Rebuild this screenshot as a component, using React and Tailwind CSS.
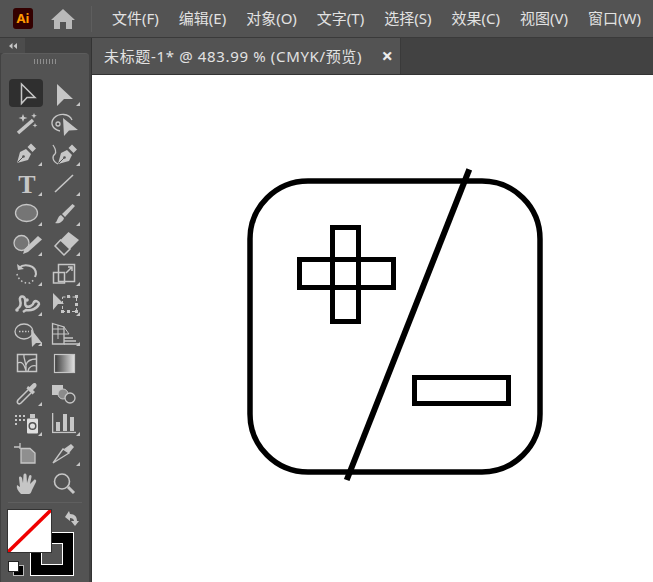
import React from "react";

const C = "#c6c6c6";
const menus = ["文件(F)", "编辑(E)", "对象(O)", "文字(T)", "选择(S)", "效果(C)", "视图(V)", "窗口(W)"];

const Pen = () => (
  <g fill={C}>
    <path d="M8 24 L11 13 L17 10 L22 15 L19 21 Z" />
    <path d="M18.5 8 L22 4.5 L27 9.5 L23.5 13 Z" />
    <path d="M8.500 23.500 L14 18" stroke="#535353" strokeWidth="1" />
    <circle cx="14.500" cy="17.500" r="1.300" fill="#535353" />
  </g>
);

const tools = [
  {
    active: true,
    icon: <path d="M12.500 5 L26 18.500 L18 18.500 L12.500 24.500 Z" fill="none" stroke={C} strokeWidth="1.500" />,
  },
  { corner: true, icon: <path d="M10 5 L26 20 L17 20 L10 27 Z" fill={C} /> },
  {
    icon: (
      <g fill={C}>
        <path d="M9 24 L24 11" stroke={C} strokeWidth="3.500" />
        <path d="M14 5 L15.200 8 L18.500 9 L15.200 10 L14 13 L12.800 10 L9.500 9 L12.800 8 Z" />
        <path d="M25 4 L25.800 6 L27.800 6.800 L25.800 7.600 L25 9.600 L24.200 7.600 L22.200 6.800 L24.200 6 Z" />
        <path d="M26 14 L26.700 15.700 L28.500 16.400 L26.700 17.100 L26 18.800 L25.300 17.100 L23.500 16.400 L25.300 15.700 Z" />
      </g>
    ),
  },
  {
    icon: (
      <g>
        <path d="M13 22 C5 20 3 14 7 9 C12 4 22 4 25 11" fill="none" stroke={C} strokeWidth="1.300" />
        <circle cx="11" cy="15" r="2" fill="none" stroke={C} strokeWidth="1.300" />
        <path d="M16 9 L31 21 L22 21.500 L17 27 Z" fill={C} />
      </g>
    ),
  },
  { corner: true, icon: <Pen /> },
  {
    corner: true,
    icon: (
      <g>
        <g transform="translate(3 1)"><Pen /></g>
        <path d="M11 25 C5 22 5 17 8 15 C10 12 8 9 6 6" fill="none" stroke={C} strokeWidth="1.300" />
      </g>
    ),
  },
  {
    corner: true,
    icon: (
      <text x="18" y="24" textAnchor="middle" fontFamily="Liberation Serif" fontWeight="700" fontSize="26" fill={C}>
        T
      </text>
    ),
  },
  { corner: true, icon: <path d="M8 23 L26 6" stroke={C} strokeWidth="1.600" /> },
  {
    corner: true,
    icon: <ellipse cx="17.500" cy="14" rx="11" ry="8.500" fill="#757575" stroke={C} strokeWidth="1.300" />,
  },
  {
    corner: true,
    icon: (
      <g fill={C}>
        <path d="M25.500 5 L28 7 L18 18 L15 15 Z" />
        <path d="M14 16 L17 19 C16 23 12 25 8 24 C11 22 10 18 14 16 Z" />
      </g>
    ),
  },
  {
    corner: true,
    icon: (
      <g>
        <circle cx="12.500" cy="14" r="7.500" fill="#757575" stroke={C} strokeWidth="1.300" />
        <path d="M29 7 L33 10.500 L19 23 L14 25 L15.500 20 Z" fill={C} />
      </g>
    ),
  },
  {
    corner: true,
    icon: (
      <g>
        <path d="M21.500 3 L32 11 L23 20 L13.500 11 Z" fill={C} />
        <path d="M13.500 11 L23 20 L17 26 L8 17 Z" fill="none" stroke={C} strokeWidth="1.500" />
      </g>
    ),
  },
  {
    corner: true,
    icon: (
      <g fill="none" stroke={C}>
        <path d="M10 9 C15 4 27 6 27 15 L26 18" strokeWidth="2" />
        <path d="M8 5 L9 11 L15 10 Z" fill={C} strokeWidth="0" />
        <path d="M8 15 C9 20 14 25 21 24 L26 20" strokeWidth="1.500" strokeDasharray="1.500 2.500" />
      </g>
    ),
  },
  {
    corner: true,
    icon: (
      <g fill="none" stroke={C} strokeWidth="1.500">
        <rect x="11.500" y="5.500" width="16" height="17" />
        <rect x="6.500" y="13.500" width="11" height="10.500" />
        <path d="M19 14 L25 8 M21 8 H25 V12" />
      </g>
    ),
  },
  {
    corner: true,
    icon: (
      <g fill="none" stroke={C} strokeWidth="2.500">
        <path d="M8 20 C12 18 12 14 11 11 C10 7 15 6 16 10 C17 14 15 15 17 17 C19 19 24 17 25 13 C27 11 30 13 30 15 C28 20 22 22 17 21 L14 23" />
        <circle cx="8" cy="21" r="1.800" fill={C} strokeWidth="0" />
        <circle cx="18" cy="11" r="1.800" fill={C} strokeWidth="0" />
      </g>
    ),
  },
  {
    corner: true,
    icon: (
      <g>
        <rect x="15.500" y="8" width="14" height="14.500" fill="none" stroke={C} strokeWidth="1" strokeDasharray="3 2" />
        <path d="M6 4 L17 15 L11 15 L6 21 Z" fill={C} />
        <g fill={C}>
          <rect x="20" y="6" width="3" height="3" />
          <rect x="28" y="6" width="3" height="3" />
          <rect x="28" y="14" width="3" height="3" />
          <rect x="28" y="21" width="3" height="3" />
          <rect x="20" y="21" width="3" height="3" />
          <rect x="14" y="21" width="3" height="3" />
        </g>
      </g>
    ),
  },
  {
    corner: true,
    icon: (
      <g>
        <ellipse cx="15" cy="12.500" rx="9" ry="7.500" fill="none" stroke={C} strokeWidth="1.300" />
        <path d="M10 12.500 H20" stroke={C} strokeWidth="1.300" strokeDasharray="1.500 1.500" />
        <path d="M22 10 L33 24 L27 24 L23 28 Z" fill={C} />
      </g>
    ),
  },
  {
    corner: true,
    icon: (
      <g fill="none" stroke={C} strokeWidth="1">
        <path d="M5.500 4.500 L17 8 V25 H5.500 Z" strokeWidth="1.300" />
        <path d="M5.500 10 H17 M5.500 15 H17 M11 6 V20 M17 8 L22 15 H17" />
        <path d="M17 19 H26 M17 22 H29 M17 25 H33" strokeWidth="1.500" />
      </g>
    ),
  },
  {
    icon: (
      <g fill="none" stroke={C} strokeWidth="1.500">
        <rect x="8.500" y="5.500" width="19" height="17" />
        <path d="M8.500 14 C13 12 15 15 17 22 M15 5.500 C14 10 18 13 17 22 M27.500 10 C22 10 18 12 17 16 M27.500 17 C24 16 20 17 19 22" strokeWidth="1.300" />
      </g>
    ),
  },
  {
    icon: (
      <g>
        <defs>
          <linearGradient id="grad">
            <stop offset="0" stopColor="#3a3a3a" />
            <stop offset="1" stopColor="#e4e4e4" />
          </linearGradient>
        </defs>
        <rect x="7.500" y="5.500" width="20" height="18" fill="url(#grad)" stroke={C} strokeWidth="1.200" />
      </g>
    ),
  },
  {
    corner: true,
    icon: (
      <g>
        <path d="M19 11 L9 21 C7 24 10 26 12 24 L22 14" fill="none" stroke={C} strokeWidth="1.500" />
        <path d="M17.500 9.500 L23.500 15.500 L26 13 L24 11 L27 8 C29 5 25.500 2.500 23.500 5 L20.500 8 L19 7 Z" fill={C} />
      </g>
    ),
  },
  {
    icon: (
      <g>
        <rect x="5" y="6" width="11" height="10" fill={C} />
        <circle cx="16" cy="15" r="5" fill="#8b8b8b" stroke={C} />
        <circle cx="23" cy="19" r="5" fill="#535353" stroke={C} strokeWidth="1.300" />
      </g>
    ),
  },
  {
    corner: true,
    icon: (
      <g>
        <g fill={C}>
          {[[6, 6], [10, 6], [14, 6], [6, 10], [10, 10], [14, 10], [6, 14]].map(([x, y]) => (
            <rect key={x + "-" + y} x={x} y={y} width="2" height="2" />
          ))}
          <rect x="21" y="5" width="5" height="4" />
        </g>
        <rect x="18" y="9.500" width="11" height="15" rx="1" fill="#e0e0e0" />
        <circle cx="23.500" cy="17" r="3.300" fill="none" stroke="#535353" strokeWidth="1.500" />
      </g>
    ),
  },
  {
    corner: true,
    icon: (
      <g fill={C}>
        <rect x="5" y="4" width="1.300" height="20" />
        <rect x="5" y="22.800" width="24" height="1.300" />
        <rect x="9" y="13" width="4" height="9" />
        <rect x="16" y="5" width="4" height="17" />
        <rect x="23" y="8" width="4" height="14" />
      </g>
    ),
  },
  {
    icon: (
      <g>
        <path d="M5 8 H11 M11 4 V10" stroke={C} strokeWidth="1.300" />
        <path d="M12 9.500 H21 L26 14 V24 H12 Z" fill="#8f8f8f" stroke={C} strokeWidth="1.300" />
      </g>
    ),
  },
  {
    corner: true,
    icon: (
      <g>
        <path d="M24 5 L27 8 L22 14 L17 10 Z" fill={C} />
        <path d="M6 24 L16 10 L22 14 Z" fill="none" stroke={C} strokeWidth="1.300" />
      </g>
    ),
  },
  {
    icon: (
      <path
        d="M12 25 C9 22 7 19 8 16 L11 18 L10 9 C10 7 12 7 13 9 L14 14 L14.500 6 C15 4 17 4 17.500 6 L18 14 L20 7 C21 5 23 6 22.500 8 L21 15 L25 11 C26 10 28 11 27 13 L23 21 C22 24 21 25 20 25 Z"
        fill={C}
      />
    ),
  },
  {
    icon: (
      <g fill="none" stroke={C}>
        <circle cx="15" cy="12.500" r="7.500" strokeWidth="1.600" />
        <path d="M21 18 L27 24" strokeWidth="3" />
      </g>
    ),
  },
];

function Tool({ active, corner, icon }) {
  return (
    <div className={active ? "w-[34px] h-[28px] mb-[2px] bg-[#2f2f2f] rounded-sm" : "w-[34px] h-[30px]"}>
      <svg width="34" height="30" viewBox="0 0 34 30" className="block">
        {icon}
        {corner && <path d="M33 23 V27 H29 Z" fill={C} />}
      </svg>
    </div>
  );
}

function ColorWidget() {
  return (
    <div className="relative h-[74px] mt-[6px]">
      {/* stroke box sits behind the fill box */}
      <div className="absolute left-[21px] top-[23px] w-[44px] h-[44px] bg-black border border-white p-[10px]">
        <div className="w-full h-full bg-[#535353] border border-white" />
      </div>
      <div className="absolute left-[-2px] top-0 w-[45px] h-[44px] bg-white border border-[#333]">
        <svg width="43" height="42" viewBox="0 0 43 42" className="block">
          <path d="M0 42 L43 0" stroke="#f00000" strokeWidth="3.500" />
        </svg>
      </div>
      <svg width="18" height="18" viewBox="0 0 18 18" className="absolute left-[53px] top-0">
        <path d="M3 8 L7 2 L8 5 C13 5 15 8 15 12 L17 12 L13 17 L9 12 L12 12 C12 10 10 9 8 9 L8 12 Z" fill={C} />
      </svg>
      <div className="absolute left-[4px] top-[56px] w-[11px] h-[11px] bg-black border border-[#bbb]" />
      <div className="absolute left-[-1px] top-[52px] w-[11px] h-[11px] bg-white border border-[#222]" />
    </div>
  );
}

export default function App() {
  return (
    <div
      className="w-[653px] h-[582px] overflow-hidden flex flex-col bg-[#535353] text-[#e2e2e2] text-[15px]"
      style={{ fontFamily: '"Noto Sans", "Noto Sans CJK SC", sans-serif' }}
    >
      <header className="h-[38px] shrink-0 flex items-center border-b border-[#3a3a3a]">
        <div className="ml-[13px] w-[20px] h-[21px] rounded-[3px] bg-[#330000] flex items-center justify-center text-[13px] font-bold leading-none text-[#ff9a00]">
          Ai
        </div>
        <svg width="24" height="20" viewBox="0 0 24 20" className="ml-[18px]">
          <path d="M12 0 L24 11 H21 V20 H15 V13 H9 V20 H3 V11 H0 Z" fill="#b9b9b9" />
        </svg>
        <div className="ml-[16px] w-px h-[26px] bg-[#5e5e5e]" />
        <nav className="ml-[20px] flex gap-[20px] whitespace-nowrap">
          {menus.map((m) => (
            <span key={m}>{m}</span>
          ))}
        </nav>
      </header>

      <div className="flex-1 flex min-h-0 bg-[#424242]">
        <aside className="w-[92px] shrink-0 flex flex-col border-r border-[#333] pr-[2px]">
          <div className="h-[15px] w-[25px] shrink-0 bg-[#4c4c4c] flex items-center justify-center">
            <svg width="8" height="6" viewBox="0 0 8 6" className="block">
              <path d="M3.500 0 V6 L0 3 Z M8 0 V6 L4.500 3 Z" fill="#c6c6c6" />
            </svg>
          </div>
          <div className="flex-1 ml-px bg-[#535353] rounded-t-sm border-t border-[#5c5c5c] px-[8px]">
            <div className="flex justify-center gap-[2px] pt-[5px] h-[25px] pr-[1px]">
              {[0, 1, 2, 3, 4, 5, 6, 7].map((i) => (
                <div key={i} className="w-px h-[5px] bg-[#8e8e8e]" />
              ))}
            </div>
            <div className="grid grid-cols-[34px_34px] gap-x-[4px]">
              {tools.map((t, i) => (
                <Tool key={i} {...t} />
              ))}
            </div>
            <div className="mt-[3px] -mx-[1px] h-px bg-[#5f5f5f]" />
            <ColorWidget />
          </div>
        </aside>

        <main className="flex-1 min-w-0 flex flex-col">
          <div className="h-[37px] shrink-0 flex border-b border-[#333]">
            <div className="w-[309px] pl-[12px] pr-[7px] flex items-center justify-between bg-[#535353] border-r border-[#3a3a3a] whitespace-nowrap">
              <span className="tracking-[0.65px]">未标题-1* @ 483.99 % (CMYK/预览)</span>
              <span className="text-[20px] font-bold text-[#ececec] leading-none">×</span>
            </div>
          </div>
          <div className="flex-1 bg-white">
            <svg width="561" height="507" viewBox="92 75 561 507" className="block">
              <rect x="250" y="181" width="290" height="291" rx="58" fill="none" stroke="#000" strokeWidth="5.500" />
              <g fill="none" stroke="#000" strokeWidth="5">
                <rect x="299.500" y="259.500" width="94" height="28" />
                <rect x="332.500" y="227.500" width="26" height="94" />
                <rect x="414.500" y="377.500" width="94" height="26" />
              </g>
              <path d="M469.300 169.300 L346.700 480" stroke="#000" strokeWidth="6" />
            </svg>
          </div>
        </main>
      </div>
    </div>
  );
}
